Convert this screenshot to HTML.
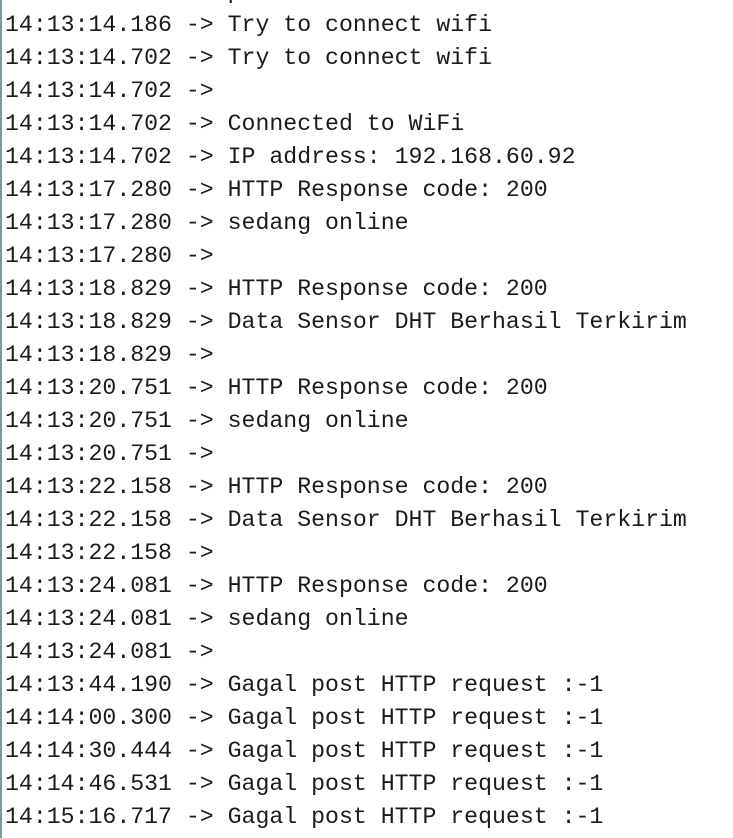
<!DOCTYPE html>
<html><head><style>
html,body{margin:0;padding:0;background:#fff;width:733px;height:838px;overflow:hidden;}
body{position:relative;}
.bar{position:absolute;left:0;top:0;width:2px;height:838px;background:#7a9a9a;}
pre{position:absolute;left:5px;top:-24px;margin:0;font-family:"Liberation Mono","Courier New",monospace;font-size:23.2px;line-height:33px;color:#1b1b1b;}
</style></head><body>
<div class="bar"></div>
<pre>14:13:14.186 -> p
14:13:14.186 -> Try to connect wifi
14:13:14.702 -> Try to connect wifi
14:13:14.702 -> 
14:13:14.702 -> Connected to WiFi
14:13:14.702 -> IP address: 192.168.60.92
14:13:17.280 -> HTTP Response code: 200
14:13:17.280 -> sedang online
14:13:17.280 -> 
14:13:18.829 -> HTTP Response code: 200
14:13:18.829 -> Data Sensor DHT Berhasil Terkirim
14:13:18.829 -> 
14:13:20.751 -> HTTP Response code: 200
14:13:20.751 -> sedang online
14:13:20.751 -> 
14:13:22.158 -> HTTP Response code: 200
14:13:22.158 -> Data Sensor DHT Berhasil Terkirim
14:13:22.158 -> 
14:13:24.081 -> HTTP Response code: 200
14:13:24.081 -> sedang online
14:13:24.081 -> 
14:13:44.190 -> Gagal post HTTP request :-1
14:14:00.300 -> Gagal post HTTP request :-1
14:14:30.444 -> Gagal post HTTP request :-1
14:14:46.531 -> Gagal post HTTP request :-1
14:15:16.717 -> Gagal post HTTP request :-1</pre>
</body></html>
